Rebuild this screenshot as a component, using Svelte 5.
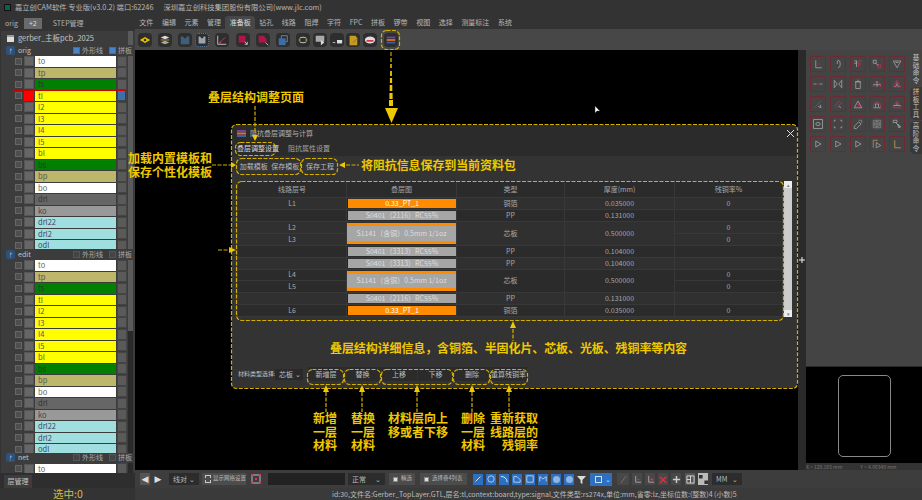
<script>
  const layerRows = [
    { name: 'to', color: 'white' },
    { name: 'tp', color: 'khaki' },
    { name: 'ts', color: 'green' },
    { name: 'tl', color: 'yellow' },
    { name: 'l2', color: 'yellow' },
    { name: 'l3', color: 'yellow' },
    { name: 'l4', color: 'yellow' },
    { name: 'l5', color: 'yellow' },
    { name: 'bl', color: 'yellow' },
    { name: 'bs', color: 'green' },
    { name: 'bp', color: 'khaki' },
    { name: 'bo', color: 'white' },
    { name: 'drl', color: 'dark' },
    { name: 'ko', color: 'grey' },
    { name: 'drl22', color: 'cyan' },
    { name: 'drl2', color: 'cyan' },
    { name: 'odl', color: 'cyan' },
  ];

  const sections = [
    { name: 'orig', checked: true, cls: 'orig', active: 'tl' },
    { name: 'edit', checked: false, cls: 'edit', active: '' },
    { name: 'net', checked: false, cls: 'net', active: '' },
  ];

  const menus = ['文件', '编辑', '元素', '管理', '准备板', '钻孔', '线路', '阻焊', '字符', 'FPC', '拼板', '锣带', '视图', '选择', '测量标注', '系统'];

  // [d, fill, stroke]
  const tools = [
    { gap: 3, parts: [['M1 7 7 3.5 13 7 7 10.5Z', '#e8c000', 'none'], ['M5.5 7a1.5 1.5 0 1 0 3 0 1.5 1.5 0 1 0-3 0', '#333', 'none']] },
    { gap: 6, parts: [['M2 4 7 2 12 4 7 6Z', '#ddd', 'none'], ['M2 7h10', 'none', '#c9a227'], ['M2 10 7 8 12 10 7 12Z', '#aaa', 'none']] },
    { gap: 6, parts: [['M2 3h3l1 2h2l1-2h3v9H2Z', '#3f5e7a', 'none']] },
    { gap: 3, box: true, parts: [['M3 3h2l1 2h2l1-2h2v8H3Z', '#9aa5b0', 'none']] },
    { gap: 6, parts: [['M2 2v10h10', 'none', '#ccc'], ['M4 10 11 4', 'none', '#d0305a'], ['M4 9h2v2H4Z', '#d0305a', 'none']] },
    { gap: 7, parts: [['M2 2h8v8H2Z', '#b0144a', 'none'], ['M9 9l3 3M12 9v3H9', 'none', '#ccc']] },
    { gap: 6, parts: [['M2 2h6l3 4v4H2Z', '#b0144a', 'none'], ['M10 10l3 3', 'none', '#ccc']] },
    { gap: 6, parts: [['M5 2h7v7H5Z', 'none', '#6a90b8'], ['M2 5h8v8H2Z', '#3a6ea5', 'none']] },
    { gap: 6, parts: [['M3 5a5 3 0 0 1 8 0', 'none', '#ddd'], ['M3 9a5 3 0 0 0 8 0', 'none', '#ddd'], ['M2 6h2v2H2ZM10 6h2v2h-2Z', '#c9a227', 'none']] },
    { gap: 3, parts: [['M2 2h10v7H2Z', '#aaa', 'none'], ['M8 7l4 3-4 3Z', '#ddd', 'none']] },
    { gap: 3, parts: [['M2 10h3', 'none', '#ccc'], ['M7 7h6v4H7Z', '#ddd', 'none']] },
    { gap: 2, parts: [['M3 2h7l2 3v8H3Z', '#c79a20', 'none'], ['M7 10l4-4', 'none', '#666']] },
    { gap: 3, parts: [['M1 7a6 4 0 0 1 12 0 6 4 0 0 1-12 0', '#ddd', 'none'], ['M3 7h8v2H3Z', '#e0304a', 'none']] },
    { gap: 7, parts: [['M2 3h10v2H2Z', '#7b3fa0', 'none'], ['M2 6h10v2H2Z', '#e07a20', 'none'], ['M2 9h10v2H2Z', '#3f5ea5', 'none']] },
  ];

  const stack = [
    { kind: 'copper', names: ['L1'], bar: '0.33_PT_1', type: '铜箔', thick: '0.035000', rest: ['0'] },
    { kind: 'pp', names: [''], bar: 'S0401（2116）RC55%', type: 'PP', thick: '0.131000', rest: [''] },
    { kind: 'core', names: ['L2', 'L3'], bar: 'S1141（含铜）0.5mm 1/1oz', type: '芯板', thick: '0.500000', rest: ['0', '0'] },
    { kind: 'pp', names: [''], bar: 'S0401（3313）RC55%', type: 'PP', thick: '0.104000', rest: [''] },
    { kind: 'pp', names: [''], bar: 'S0401（3313）RC55%', type: 'PP', thick: '0.104000', rest: [''] },
    { kind: 'core', names: ['L4', 'L5'], bar: 'S1141（含铜）0.5mm 1/1oz', type: '芯板', thick: '0.500000', rest: ['0', '0'] },
    { kind: 'pp', names: [''], bar: 'S0401（2116）RC55%', type: 'PP', thick: '0.131000', rest: [''] },
    { kind: 'copper', names: ['L6'], bar: '0.33_PT_1', type: '铜箔', thick: '0.035000', rest: ['0'] },
  ];

  const P = '#d02a58';
  const G = '#a8a8a8';
  const sideTools = [
    [['M5 3v10h8', G], ['M8 8h2', P]],
    [['M8 3a3 5 0 0 1 0 10M8 3a3 5 0 0 0-1 5', G]],
    [['M3 4h4M3 7h4M6 4v8', G], ['M9 4h4M9 4v8M9 8h3', P]],
    [['M3 3h4v4H3Z', G], ['M9 9h4v4H9Z', P], ['M6 7l4 3', G]],
    [['M3 4h10L8 13Z', G], ['M6 6h4', G]],
    [['M2 8h4M10 8h4', G], ['M6 8h4', P]],
    [['M3 3v10l4-5ZM13 3v10l-4-5Z', G], ['M7 8h2', P]],
    [['M5 5h6v9H5ZM4 5h8M7 3h2', G]],
    [['M3 12a5 7 0 0 1 10 0', P], ['M3 9h10', G], ['M8 4v8', G]],
    [['M8 3l5 9H3Z', P], ['M8 6v4M5 12l3-3 3 3', G]],
    [['M3 13 12 4', P], ['M8 11l4 2-1-4', G]],
    [['M3 11 10 4M6 13l7-7', P], ['M9 11l3 2', G]],
    [['M3 13h10L8 4Z', G], ['M8 13V8l4 4', P]],
    [['M3 12a5 7 0 0 1 10 0', P], ['M3 13h10', G], ['M6 12V8h4v4', G]],
    [['M8 4l5 9H3Z', P], ['M3 10h10', G], ['M8 7v3', G]],
    [['M2 2h12v12H2Z', G], ['M5 8a3 2 0 0 1 6 0 3 2 0 0 1-6 0', G]],
    [['M3 3h2M3 3v2M13 3h-2M13 3v2M3 13h2M3 13v-2M13 13h-2M13 13v-2', G]],
    [['M3 11l6-6 3 3-6 6H3Z', G], ['M9 3h4v4', '#888']],
    [['M3 3h10v10H3ZM5 5h6v6H5ZM8 3v10M3 8h10', '#888']],
    [['M3 3h5v3H3ZM6 6l6 6', G], ['M9 8l4 4-3 1Z', G]],
    [['M5 4l7 4-7 4Z', G]],
    [['M5 4l7 4-7 4Z', G]],
    [['M5 4l7 4-7 4Z', G]],
    [['M3 3v10M3 3h6', '#b89a50'], ['M7 6l6 4-6 3Z', G]],
    [['M5 3v10h8', '#c9a84f']],
  ];

  const shapes = [
    ['M2 8 8 2', '#fff'], ['M1 5a4 4 0 1 0 8 0 4 4 0 1 0-8 0', '#cfe0f5'],
    ['M1 2a7 7 0 0 1 8 7', '#fff'], ['M1 9V2h4l4 4v3Z', '#cfe0f5'],
    ['M1 1h8v8H1Z', '#cfe0f5'], ['M1 8V2l4 3 4-3v6', '#cfe0f5'],
  ];
  const rounds = [0, 1];

  // dashes of the big arrow, thickening on the way down
  const bigDashes = [
    [52, 4, 1], [58, 4, 1.2], [64, 4, 1.5], [71, 5, 1.8], [78, 5, 2.2], [85, 6, 2.6], [93, 6, 3.2], [100, 6, 4],
  ];
  const upArrows = [326, 362, 417, 472, 509];
  const groups = [[307, 36], [344, 36], [381, 71], [453, 36], [490, 37]];
</script>

<div class="app">
  <div class="title">
    <span class="logo"></span>
    <span>嘉立创CAM软件 专业版(v3.0.2) 端口:62246</span>
    <span class="company">深圳嘉立创科技集团股份有限公司(www.jlc.com)</span>
  </div>

  <div class="body">
    <aside class="left">
      <div class="left-tabs">
        <span>orig</span>
        <span class="plus">+2</span>
        <span>STEP管理</span>
      </div>
      <div class="left-panel">
        <div class="job"><span class="job-icon"></span>gerber_主板pcb_2025</div>
        {#each sections as s}
          <div class="sec-head">
            <span class="branch">ᚠ</span>
            <span class="sec-name">{s.name}</span>
            <span class="opt" class:on={s.checked}></span><span class="opt-label">外形线</span>
            <span class="opt second" class:on={s.checked}></span><span class="opt-label">拼板</span>
          </div>
          <div class="rows {s.cls}">
            {#each layerRows as r}
              <div class="row" class:active={r.name === s.active}>
                <span class="check"></span>
                <span class="swatch"></span>
                <span class="bar {r.color}">{r.name}</span>
                <span class="end"></span>
              </div>
            {/each}
          </div>
        {/each}
        <div class="thumb"></div>
      </div>
      <div class="left-foot"><span class="foot-tab">层管理</span></div>
      <div class="selected">选中:0</div>
    </aside>

    <main class="main">
      <nav class="menu">
        {#each menus as m}
          <span class:current={m === '准备板'}>{m}</span>
        {/each}
      </nav>
      <div class="tools">
        {#each tools as t}
          <span class="tool" class:boxed={t.box} style="margin-left:{t.gap}px">
            <svg viewBox="0 0 14 14" width="12" height="12">
              {#each t.parts as p}<path d={p[0]} fill={p[1]} stroke={p[2]} />{/each}
            </svg>
          </span>
        {/each}
      </div>

      <div class="work">
        <div class="canvas">
          <div class="dialog">
            <div class="dlg-title">
              <svg class="dlg-icon" viewBox="0 0 9 9" width="9" height="9">
                <path d="M0 1h9v2H0Z" fill="#7b3fa0" /><path d="M0 3.5h9v2H0Z" fill="#d8704a" /><path d="M0 6h9v2H0Z" fill="#3f5ea5" />
              </svg>
              <span>阻抗叠层调整与计算</span>
              <svg class="close" viewBox="0 0 9 9" width="9" height="9"><path d="M1 1l7 7M8 1 1 8" stroke="#ddd" stroke-width="1" /></svg>
            </div>
            <div class="dlg-tabs">
              <span class="dlg-tab on">叠层调整设置</span>
              <span class="dlg-tab">阻抗属性设置</span>
            </div>
            <div class="dlg-actions">
              <span>加载模板</span><span>保存模板</span><span class="sep">保存工程</span>
            </div>

            <div class="table-wrap">
              <div class="table">
                <div class="tr head">
                  <div>线路层号</div><div>叠层图</div><div>类型</div><div>厚度(mm)</div><div>残铜率%</div>
                </div>
                {#each stack as row}
                  <div class="tr {row.kind}">
                    <div class="split">{#each row.names as n}<span>{n}</span>{/each}</div>
                    <div class="cell-bar"><span class="stack-bar {row.kind}">{row.bar}</span></div>
                    <div>{row.type}</div>
                    <div>{row.thick}</div>
                    <div class="split">{#each row.rest as n}<span>{n}</span>{/each}</div>
                  </div>
                {/each}
              </div>
              <div class="vscroll">
                <span class="sb-btn">▴</span>
                <span class="sb-fill"></span>
                <span class="sb-btn">▾</span>
              </div>
            </div>

            <div class="dlg-foot">
              <span class="foot-label">材料类型选择:</span>
              <span class="foot-select">芯板<i>⌄</i></span>
              <span class="fbtn">新增层</span>
              <span class="fbtn">替换</span>
              <span class="fbtn">上移</span>
              <span class="fbtn">下移</span>
              <span class="fbtn">删除</span>
              <span class="fbtn">重算残铜率</span>
            </div>
          </div>
        </div>
        <div class="strip"></div>
        <div class="right">
          <div class="right-panel">
            <div class="side-grid">
              {#each sideTools as t}
                <span class="side-tool">
                  <svg viewBox="0 0 16 16" width="12" height="12">
                    {#each t as p}<path d={p[0]} fill="none" stroke={p[1]} />{/each}
                  </svg>
                </span>
              {/each}
            </div>
            <div class="side-tabs">
              <span class="side-tab plain">基础命令</span>
              <span class="side-tab">拼板工具</span>
              <span class="side-tab">高阶命令</span>
            </div>
          </div>
          <div class="mini"><span class="mini-board"></span></div>
          <div class="coords"><span>X = 128.165 mm</span><span>Y = 4.06348 mm</span></div>
        </div>
      </div>

      <div class="bottom">
        <span class="nav-btn first">◀</span>
        <span class="nav-btn">▶</span>
        <span class="sel w-line">线对<i>⌄</i></span>
        <span class="btn w-grid"><b class="grid-ico"></b>显示网格设置</span>
        <svg class="red-ico" viewBox="0 0 12 12" width="12" height="12">
          <path d="M2 2h8v8H2Z" fill="none" stroke="#bbb" /><path d="M1 1h2v2H1ZM9 1h2v2H9ZM1 9h2v2H1ZM9 9h2v2H9ZM5 5h2v2H5Z" fill="#e0305f" />
        </svg>
        <span class="input"></span>
        <span class="sel w-mode">正常<i>⌄</i></span>
        <span class="btn w-fine"><b class="dot"></b>精选</span>
        <span class="btn w-list"><b class="dot"></b>选择叠4列表</span>
        <span class="shapes">
          {#each shapes as s}
            <span class="shape">
              <svg viewBox="0 0 10 10" width="8" height="8"><path d={s[0]} fill="none" stroke={s[1]} /></svg>
            </span>
          {/each}
          {#each rounds as r}
            <span class="shape"><span class="round-ico"></span></span>
          {/each}
        </span>
        <svg class="funnel" viewBox="0 0 10 10" width="9" height="9"><path d="M0 1h10L6 5.5V10L4 9V5.5Z" fill="#ddd" /></svg>
        <span class="blue-sel"><b></b><i>⌄</i></span>
        <span class="small first-small"><svg viewBox="0 0 10 10" width="9" height="9"><path d="M2 9 8 1" stroke="#8a6a6a" /></svg></span>
        <span class="small"><svg viewBox="0 0 10 10" width="9" height="9"><path d="M3 1v7h6" fill="none" stroke="#aaa" /><path d="M5 5h2" stroke="#e0305f" /></svg></span>
        <span class="small"><svg viewBox="0 0 10 10" width="9" height="9"><path d="M3 1v7h6" fill="none" stroke="#aaa" /><path d="M5 5h3" stroke="#e0305f" stroke-width="2" /></svg></span>
        <span class="small"><svg viewBox="0 0 10 10" width="9" height="9"><path d="M1 2l7 7M8 2 1 9" stroke="#e03040" stroke-width="1.6" /></svg></span>
        <span class="small"><svg viewBox="0 0 10 10" width="9" height="9"><path d="M5 1v8M1 5h8" stroke="#ccc" stroke-width="1.6" /></svg></span>
        <span class="small boxed-small"><svg viewBox="0 0 10 10" width="9" height="9"><path d="M1 1h8v8H1ZM5 1v8M1 5h4" fill="none" stroke="#ddd" /></svg></span>
        <span class="small light-small"><svg viewBox="0 0 10 10" width="9" height="9"><path d="M0 0h4v4H0ZM6 6h4v4H6Z" fill="#333" /></svg></span>
        <span class="sel w-unit">MM<i>⌄</i></span>
      </div>
      <div class="status">id:30,文件名:Gerber_TopLayer.GTL,层名:tl,context:board,type:signal,文件类型:rs274x,单位:mm,省零:lz,坐标位数:(整数)4 (小数)5</div>
    </main>
  </div>

  <!-- yellow notes drawn on top of the screenshot -->
  <svg class="marks" viewBox="0 0 922 500" width="922" height="500">
    <g fill="none" stroke="#d4b000" stroke-width="1.200" stroke-dasharray="4 1.500">
      <rect x="381.5" y="30.5" width="18" height="19" rx="5" />
      <rect x="231.5" y="124.5" width="566" height="264" rx="5" />
      <rect x="235.5" y="142.5" width="40" height="13" rx="5" />
      <rect x="236.5" y="158.5" width="64" height="16" rx="5" />
      <rect x="301.5" y="158.5" width="36" height="16" rx="5" />
      <rect x="236.5" y="181.5" width="547" height="139" rx="5" />
      {#each groups as g}
        <rect x={g[0] + 0.5} y="369.5" width={g[1]} height="15" rx="5" />
      {/each}
      <path d="M255 106V134" />
      <path d="M212 165H231" />
      <path d="M346 165H359" />
      <path d="M218 250H228" />
      <path d="M513 329V341" />
      {#each upArrows as x}
        <path d="M{x} 392V412" />
      {/each}
    </g>
    <g fill="#eec800">
      {#each bigDashes as d}
        <rect x={391 - d[2] / 2} y={d[0]} width={d[2]} height={d[1]} />
      {/each}
      <path d="M385 108H398L391.500 123Z" />
      <path d="M252 135H258L255 141Z" />
      <path d="M231 162V168L236 165Z" />
      <path d="M345 162V168L339 165Z" />
      <path d="M229 247V253L236 250Z" />
      <path d="M510 328H516L513 321Z" />
      {#each upArrows as x}
        <path d="M{x - 3} 392H{x + 3}L{x} 385Z" />
      {/each}
    </g>
    <path d="M595 106l0 7 2-2 3 0Z" fill="#fff" stroke="#333" stroke-width="0.5" />
    <path d="M802 257v6M799 260h6" stroke="#eee" stroke-width="1" />
  </svg>

  <div class="note n-page">叠层结构调整页面</div>
  <div class="note n-tpl">加载内置模板和<br />保存个性化模板</div>
  <div class="note n-save">将阻抗信息保存到当前资料包</div>
  <div class="note n-detail">叠层结构详细信息，含铜箔、半固化片、芯板、光板、残铜率等内容</div>
  <div class="note n-stack n-add">新增<br />一层<br />材料</div>
  <div class="note n-stack n-swap">替换<br />一层<br />材料</div>
  <div class="note n-stack n-move">材料层向上<br />移或者下移</div>
  <div class="note n-stack n-del">删除<br />一层<br />材料</div>
  <div class="note n-stack n-calc">重新获取<br />线路层的<br /><span class="n-right">残铜率</span></div>
</div>

<style>
  :global(body) {
    margin: 0;
    background: #333;
  }

  .app {
    position: relative;
    width: 922px;
    height: 500px;
    overflow: hidden;
    display: flex;
    flex-direction: column;
    background: #333;
    color: #c4c4c4;
    font-family: 'Noto Sans CJK SC', 'Liberation Sans', sans-serif;
    font-size: 7px;
    line-height: 1;
  }

  i {
    font-style: normal;
  }

  .title {
    height: 15px;
    flex: none;
    display: flex;
    align-items: center;
    background: #333;
    color: #b8b8b8;
    font-size: 7.3px;
    padding-left: 4px;
  }

  .logo {
    width: 7px;
    height: 7px;
    margin-right: 4px;
    background: #0d5f4e;
    border: 1px solid #111;
    box-sizing: border-box;
  }

  .company {
    margin-left: 10px;
  }

  .body {
    flex: 1;
    display: flex;
    min-height: 0;
  }

  /* left layer panel */
  .left {
    width: 135px;
    flex: none;
    display: flex;
    flex-direction: column;
    background: #333;
  }

  .left-tabs {
    height: 16px;
    flex: none;
    display: flex;
    align-items: center;
    padding-left: 5px;
    font-size: 7px;
    color: #b0b0b0;
    gap: 6px;
  }

  .plus {
    width: 18px;
    height: 11px;
    line-height: 11px;
    text-align: center;
    background: #6a6a6a;
    color: #ddd;
    margin-right: 5px;
  }

  .left-panel {
    position: relative;
    flex: 1;
    min-height: 0;
    margin-left: 1px;
    background: #3c3c3c;
    overflow: hidden;
  }

  .job {
    height: 14px;
    display: flex;
    align-items: center;
    gap: 4px;
    padding-left: 6px;
    font-size: 7.5px;
    color: #c4c4c4;
  }

  .job-icon {
    width: 7px;
    height: 7px;
    background: #ddd;
    border-top: 2px solid #999;
    box-sizing: border-box;
  }

  .sec-head {
    height: 10.5px;
    display: flex;
    align-items: center;
    background: #3c3c3c;
    font-size: 7px;
    padding-left: 5px;
    position: relative;
    z-index: 1;
  }

  .branch {
    width: 9px;
    height: 9px;
    background: #2f5078;
    color: #cfe0f5;
    border-radius: 2px;
    text-align: center;
    line-height: 9px;
    font-size: 6px;
    font-family: 'DejaVu Sans', sans-serif;
  }

  .sec-name {
    width: 55px;
    margin-left: 3px;
  }

  .opt {
    width: 5px;
    height: 5px;
    background: #444;
    border: 1px solid #555;
    margin-right: 2px;
  }

  .opt.on {
    background: #4a84c8;
    border-color: #3a70b0;
  }

  .opt.second {
    margin-left: 6px;
  }

  .opt-label {
    color: #aaa;
  }

  .rows {
    overflow: hidden;
  }

  .rows.orig {
    height: 193.500px;
  }

  .rows.edit {
    height: 193px;
  }

  .rows.net {
    height: 10px;
  }

  .row {
    height: 11.500px;
    display: flex;
    align-items: center;
    position: relative;
    padding-left: 14px;
    box-sizing: border-box;
  }

  .check {
    width: 5px;
    height: 5px;
    background: #4e4e4e;
    border: 1px solid #666;
  }

  .swatch {
    width: 10px;
    height: 10px;
    margin-left: 2px;
    background: #666;
    border: 1px solid #555;
    box-sizing: border-box;
  }

  .bar {
    width: 81px;
    height: 10.500px;
    line-height: 10.500px;
    margin-left: 1px;
    padding-left: 3px;
    box-sizing: border-box;
    font-size: 7.5px;
    color: #444;
  }

  .white { background: #fff; color: #666; }
  .khaki { background: #bdb76b; color: #555; }
  .green { background: #007f00; color: #333; }
  .yellow { background: #ff0; color: #555; }
  .dark { background: #666; color: #333; }
  .grey { background: #999; color: #444; }
  .cyan { background: #9fdfdf; color: #446; }

  .end {
    width: 8px;
    height: 9px;
    margin-left: 1px;
    background: #5a5a5a;
    border: 1px solid #444;
  }

  .row.active::after {
    content: '';
    position: absolute;
    left: 12px;
    right: 9px;
    top: 0;
    bottom: 0;
    border: 1px solid #c00;
    pointer-events: none;
  }

  .row.active .swatch {
    background: #f00;
    border-color: #f00;
  }

  .row.active .end {
    background: #3d6fa8;
  }

  .thumb {
    position: absolute;
    right: 2px;
    top: 0;
    bottom: 0;
    width: 5px;
    background: linear-gradient(#5a5a5a 0 300px, #2a2a2a 300px);
  }

  .left-foot {
    height: 15px;
    flex: none;
    background: #2e2e2e;
    display: flex;
    align-items: flex-end;
    padding-left: 4px;
  }

  .foot-tab {
    width: 28px;
    height: 13px;
    line-height: 13px;
    text-align: center;
    background: #3c3c3c;
  }

  .selected {
    height: 12px;
    flex: none;
    background: #333;
    color: #d9b84a;
    font-size: 10.500px;
    line-height: 12px;
    padding-left: 53px;
  }

  /* main column */
  .main {
    flex: 1;
    min-width: 0;
    display: flex;
    flex-direction: column;
  }

  .menu {
    height: 14px;
    flex: none;
    display: flex;
    align-items: flex-end;
    font-size: 7px;
    color: #b8b8b8;
  }

  .menu span {
    padding: 3px 4.300px;
    white-space: nowrap;
  }

  .menu .current {
    background: #474747;
    border-radius: 3px 3px 0 0;
    color: #ddd;
  }

  .tools {
    height: 21px;
    flex: none;
    display: flex;
    align-items: center;
    background: #474747;
  }

  .tool {
    width: 14px;
    height: 14px;
    flex: none;
    display: flex;
    align-items: center;
    justify-content: center;
    background: #2e2e2e;
    border-radius: 4px;
  }

  .tool.boxed {
    border: 1px dotted #5a7ea8;
    box-sizing: border-box;
  }

  .work {
    height: 420px;
    flex: none;
    display: flex;
  }

  .canvas {
    position: relative;
    width: 663px;
    flex: none;
    background: #000;
  }

  .strip {
    width: 8px;
    flex: none;
    background: #2a2a2a;
  }

  /* modal over the canvas */
  .dialog {
    position: absolute;
    left: 97px;
    top: 75px;
    width: 565px;
    height: 263px;
    background: #333;
    border-radius: 4px;
    display: flex;
    flex-direction: column;
  }

  .dlg-title {
    height: 16px;
    flex: none;
    display: flex;
    align-items: center;
    background: #2b2b2b;
    padding-left: 5px;
    color: #b0b0b0;
    border-radius: 4px 4px 0 0;
  }

  .dlg-icon {
    margin-right: 4px;
  }

  .close {
    margin-left: auto;
    margin-right: 2px;
  }

  .dlg-tabs {
    height: 15px;
    flex: none;
    display: flex;
    align-items: center;
    background: #2b2b2b;
    padding-left: 5px;
    gap: 9px;
    color: #a0a0a0;
  }

  .dlg-tab.on {
    color: #ddd;
  }

  .dlg-actions {
    height: 20px;
    flex: none;
    display: flex;
    align-items: center;
    padding-left: 6px;
    color: #bbb;
  }

  .dlg-actions span {
    width: 31.500px;
    text-align: center;
  }

  .dlg-actions .sep {
    margin-left: 2px;
    width: 34px;
  }

  .table-wrap {
    display: flex;
    margin: 5px 5px 0 6px;
    height: 136px;
  }

  .table {
    width: 545px;
    flex: none;
    background: #2b2b2b;
    color: #a8a8a8;
  }

  .tr {
    display: grid;
    grid-template-columns: 109px 110px 108px 110px 108px;
    height: 12px;
    text-align: center;
  }

  .tr > div {
    display: flex;
    align-items: center;
    justify-content: center;
    border-right: 1px solid #383838;
    border-bottom: 1px solid #383838;
    box-sizing: border-box;
    min-width: 0;
  }

  .tr:nth-child(even) > div {
    background: #303030;
  }

  .tr.head {
    height: 17px;
  }

  .tr.core {
    height: 23.500px;
  }

  .tr > .split {
    flex-direction: column;
    align-items: stretch;
    justify-content: stretch;
  }

  .split span {
    flex: 1;
    display: flex;
    align-items: center;
    justify-content: center;
  }

  .split span + span {
    border-top: 1px solid #383838;
  }

  .tr > .cell-bar {
    padding: 1px 0;
    align-items: stretch;
  }

  .stack-bar {
    flex: 1;
    display: flex;
    align-items: center;
    justify-content: center;
    background: #a6a6a6;
    color: #dedede;
    white-space: nowrap;
    border: 1px solid #222;
    border-width: 0 0 0 1px;
  }

  .stack-bar.copper {
    background: #ff8c00;
    color: #fff;
  }

  .stack-bar.core {
    border-top: 3px solid #ff8c00;
    border-bottom: 3px solid #ff8c00;
    border-left: 0;
  }

  .vscroll {
    width: 8px;
    margin-left: 1px;
    display: flex;
    flex-direction: column;
    background: #ccc;
  }

  .sb-btn {
    height: 7px;
    line-height: 7px;
    background: #eee;
    color: #777;
    text-align: center;
    font-size: 5px;
  }

  .sb-fill {
    flex: 1;
  }

  .dlg-foot {
    display: flex;
    align-items: center;
    margin-top: 49px;
    padding-left: 6px;
    height: 16px;
    color: #c0c0c0;
  }

  .foot-label {
    width: 37px;
    font-size: 6px;
    white-space: nowrap;
  }

  .foot-select {
    width: 28px;
    height: 11px;
    background: #2a2a2a;
    display: flex;
    align-items: center;
    justify-content: space-between;
    padding: 0 2px 0 4px;
    box-sizing: border-box;
    margin-right: 5px;
  }

  .fbtn {
    width: 36px;
    flex: none;
    height: 14px;
    line-height: 14px;
    background: #2b2b2b;
    text-align: center;
    margin-right: 0.500px;
    white-space: nowrap;
  }

  /* right column */
  .right {
    flex: 1;
    display: flex;
    flex-direction: column;
    background: #444;
  }

  .right-panel {
    height: 317px;
    flex: none;
    position: relative;
    background: #444;
    border-bottom: 1px solid #2a2a2a;
    box-sizing: border-box;
  }

  .side-grid {
    display: grid;
    grid-template-columns: repeat(5, 16px);
    grid-auto-rows: 16px;
    gap: 4px 3.800px;
    padding: 6px 0 0 4px;
  }

  .side-tool {
    border: 1px solid #6e2a32;
    border-radius: 1px;
    display: flex;
    align-items: center;
    justify-content: center;
    box-sizing: border-box;
  }

  .side-tabs {
    position: absolute;
    top: 3px;
    right: 0;
    width: 12px;
    display: flex;
    flex-direction: column;
    gap: 1px;
  }

  .side-tab {
    background: #383838;
    border-radius: 5px 0 0 5px;
    color: #c4c4c4;
    font-size: 6.500px;
    line-height: 12px;
    writing-mode: vertical-rl;
    white-space: nowrap;
    text-align: center;
    height: 33px;
    letter-spacing: 1.300px;
  }

  .side-tab.plain {
    background: none;
  }

  .mini {
    height: 96px;
    flex: none;
    background: #000;
    display: flex;
    justify-content: center;
    padding-top: 8px;
    box-sizing: border-box;
  }

  .mini-board {
    width: 51px;
    height: 80px;
    border: 1px solid #888;
    border-radius: 5px;
  }

  .coords {
    flex: 1;
    display: flex;
    background: #333;
    font-size: 5px;
    line-height: 7px;
    color: #777;
    gap: 18px;
  }

  /* bottom bar */
  .bottom {
    height: 18px;
    flex: none;
    display: flex;
    align-items: center;
    background: #3d3d3d;
    padding-left: 5px;
    color: #b8b8b8;
  }

  .nav-btn {
    width: 10px;
    height: 12px;
    line-height: 12px;
    text-align: center;
    font-size: 9px;
    color: #ddd;
    font-family: 'DejaVu Sans', sans-serif;
  }

  .nav-btn.first {
    background: #555;
    margin-right: 3px;
  }

  .sel {
    height: 12px;
    background: #2c2c2c;
    display: flex;
    align-items: center;
    justify-content: space-between;
    padding: 0 4px;
    box-sizing: border-box;
    flex: none;
  }

  .w-line { width: 30px; margin-left: 6px; }
  .w-mode { width: 37px; margin-left: 3px; }
  .w-unit { width: 30px; margin-left: 4px; }

  .btn {
    height: 12px;
    display: flex;
    align-items: center;
    gap: 2px;
    background: #4c4c4c;
    font-size: 5.500px;
    box-sizing: border-box;
    padding-left: 3px;
    flex: none;
    white-space: nowrap;
  }

  .w-grid { width: 44px; margin-left: 3px; }
  .w-fine { width: 26px; margin-left: 4px; }
  .w-list { width: 47px; margin-left: 5px; }

  .grid-ico {
    width: 6px;
    height: 6px;
    border: 1px dashed #ccc;
  }

  .dot {
    width: 3px;
    height: 3px;
    margin: 0 2px;
    background: #ddd;
    outline: 1px solid #888;
  }

  .red-ico {
    margin-left: 4px;
    flex: none;
  }

  .input {
    width: 77px;
    height: 12px;
    margin-left: 6px;
    background: #222;
    flex: none;
  }

  .shapes {
    display: flex;
    gap: 3px;
    margin-left: 6px;
  }

  .shape {
    width: 10px;
    height: 11px;
    background: #2d6fc0;
    display: flex;
    align-items: center;
    justify-content: center;
    flex: none;
  }

  .round-ico {
    width: 7px;
    height: 7px;
    border-radius: 50%;
    background: #8fb4e0;
  }

  .funnel {
    margin-left: 3px;
    flex: none;
  }

  .blue-sel {
    width: 22px;
    height: 13px;
    margin-left: 4px;
    background: #2d6fc0;
    display: flex;
    align-items: center;
    padding-left: 5px;
    gap: 3px;
    box-sizing: border-box;
    color: #cde;
    flex: none;
  }

  .blue-sel b {
    width: 7px;
    height: 7px;
    border: 1px solid #cde;
    box-sizing: border-box;
  }

  .small {
    width: 10px;
    height: 12px;
    margin-left: 3px;
    display: flex;
    align-items: center;
    justify-content: center;
    background: #484848;
    flex: none;
  }

  .first-small { margin-left: 5px; width: 12px; }
  .boxed-small { background: #555; margin-left: 4px; }
  .light-small { background: #bbb; }

  .status {
    flex: 1;
    background: #3a3a3a;
    padding-left: 197px;
    font-size: 7px;
    line-height: 12px;
    color: #bcbcbc;
    white-space: nowrap;
  }

  /* annotation overlay */
  .marks {
    position: absolute;
    left: 0;
    top: 0;
    pointer-events: none;
  }

  .note {
    position: absolute;
    color: #eec800;
    font-size: 12px;
    font-weight: 700;
    line-height: 14px;
    white-space: nowrap;
  }

  .n-page { left: 208px; top: 90px; }
  .n-tpl { left: 128px; top: 151px; }
  .n-save { left: 361px; top: 158px; letter-spacing: -0.100px; }
  .n-detail { left: 330px; top: 341px; letter-spacing: -0.100px; }
  .n-stack { top: 411px; line-height: 13.500px; }
  .n-add { left: 313px; }
  .n-swap { left: 351px; }
  .n-move { left: 388px; }
  .n-del { left: 461px; }
  .n-calc { left: 490px; }
  .n-right { margin-left: 12px; }
</style>
